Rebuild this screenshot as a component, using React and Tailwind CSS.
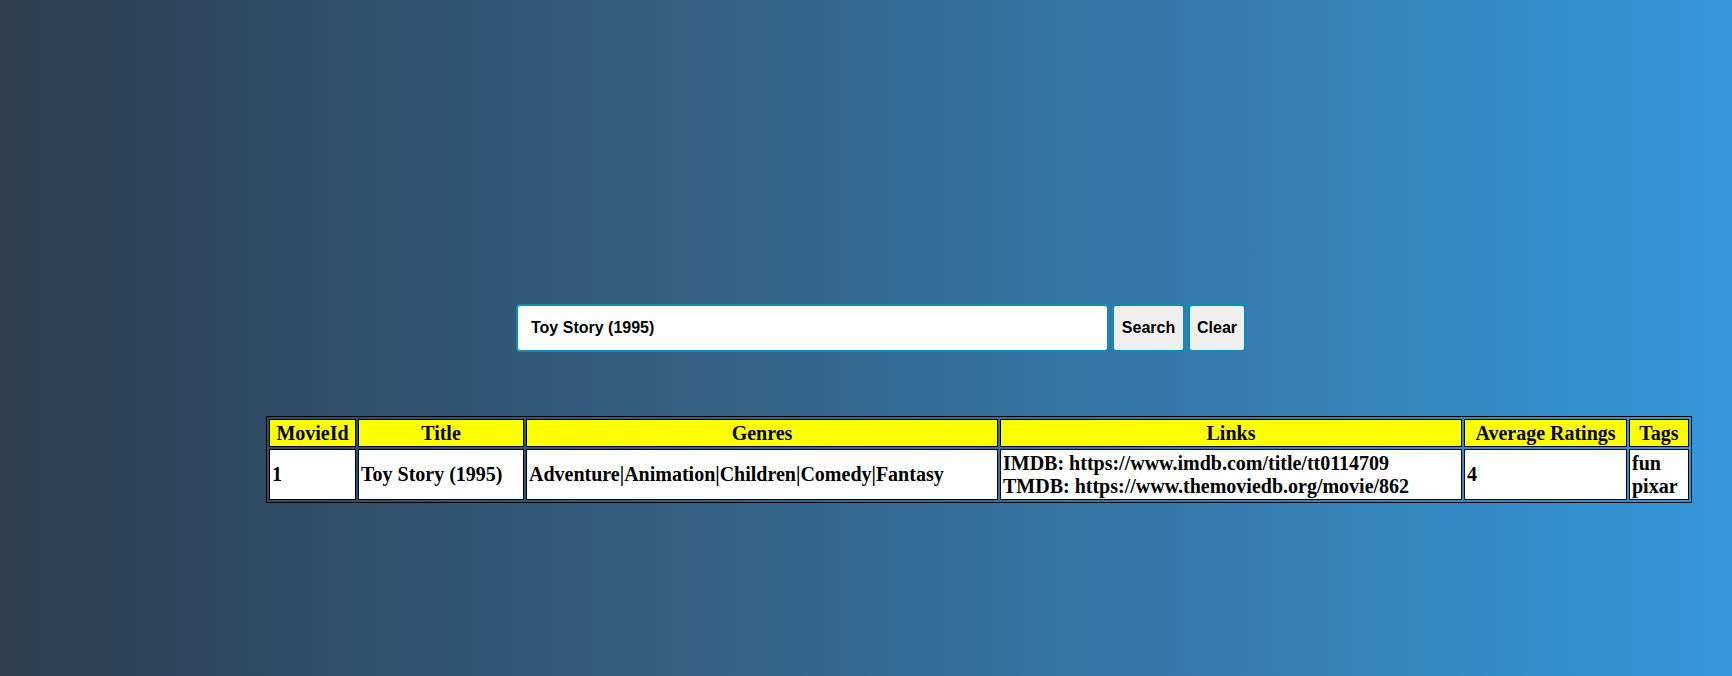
export default function App() {
  const serif = { fontFamily: '"Liberation Serif", "Times New Roman", serif' };
  const th = "border border-black bg-[#ffff00] px-[1px] py-[1px] text-center font-bold leading-[23px] text-black";
  const td = "border border-black bg-white px-[2px] py-[1px] text-left align-middle font-bold leading-[23px] text-black";
  return (
    <div className="min-h-[676px] w-full bg-gradient-to-r from-[#2c3e50] to-[#3498db] pt-[304px]">
      <div className="flex w-full justify-center">
        <div className="ml-[30px] flex items-stretch gap-[3px]" style={{ fontFamily: '"Liberation Sans", Arial, sans-serif' }}>
          <input
            readOnly
            value="Toy Story (1995)"
            className="h-[48px] w-[593px] rounded-[4px] border-2 border-[#0a8cba] bg-white px-[13px] text-[16px] font-bold text-black outline-none"
          />
          <button className="h-[48px] w-[73px] rounded-[4px] border-2 border-[#0a8cba] bg-[#efefef] text-[16px] font-bold text-black">
            Search
          </button>
          <button className="h-[48px] w-[58px] rounded-[4px] border-2 border-[#0a8cba] bg-[#efefef] text-[16px] font-bold text-black">
            Clear
          </button>
        </div>
      </div>
      <div className="mt-[64px] pl-[266px]">
        <table
          className="w-[1426px] table-fixed border-separate border-spacing-[2px] border border-black text-[20px]"
          style={serif}
        >
          <thead>
            <tr className="h-[28px]">
              <th className={`${th} w-[87px]`}>MovieId</th>
              <th className={`${th} w-[166px]`}>Title</th>
              <th className={`${th} w-[472px]`}>Genres</th>
              <th className={`${th} w-[462px]`}>Links</th>
              <th className={`${th} w-[163px]`}>Average Ratings</th>
              <th className={`${th} w-[60px]`}>Tags</th>
            </tr>
          </thead>
          <tbody>
            <tr className="h-[51px]">
              <td className={td}>1</td>
              <td className={td}>Toy Story (1995)</td>
              <td className={td}>Adventure|Animation|Children|Comedy|Fantasy</td>
              <td className={td}>
                <div>IMDB: https://www.imdb.com/title/tt0114709</div>
                <div>TMDB: https://www.themoviedb.org/movie/862</div>
              </td>
              <td className={td}>4</td>
              <td className={td}>
                <div>fun</div>
                <div>pixar</div>
              </td>
            </tr>
          </tbody>
        </table>
      </div>
    </div>
  );
}
